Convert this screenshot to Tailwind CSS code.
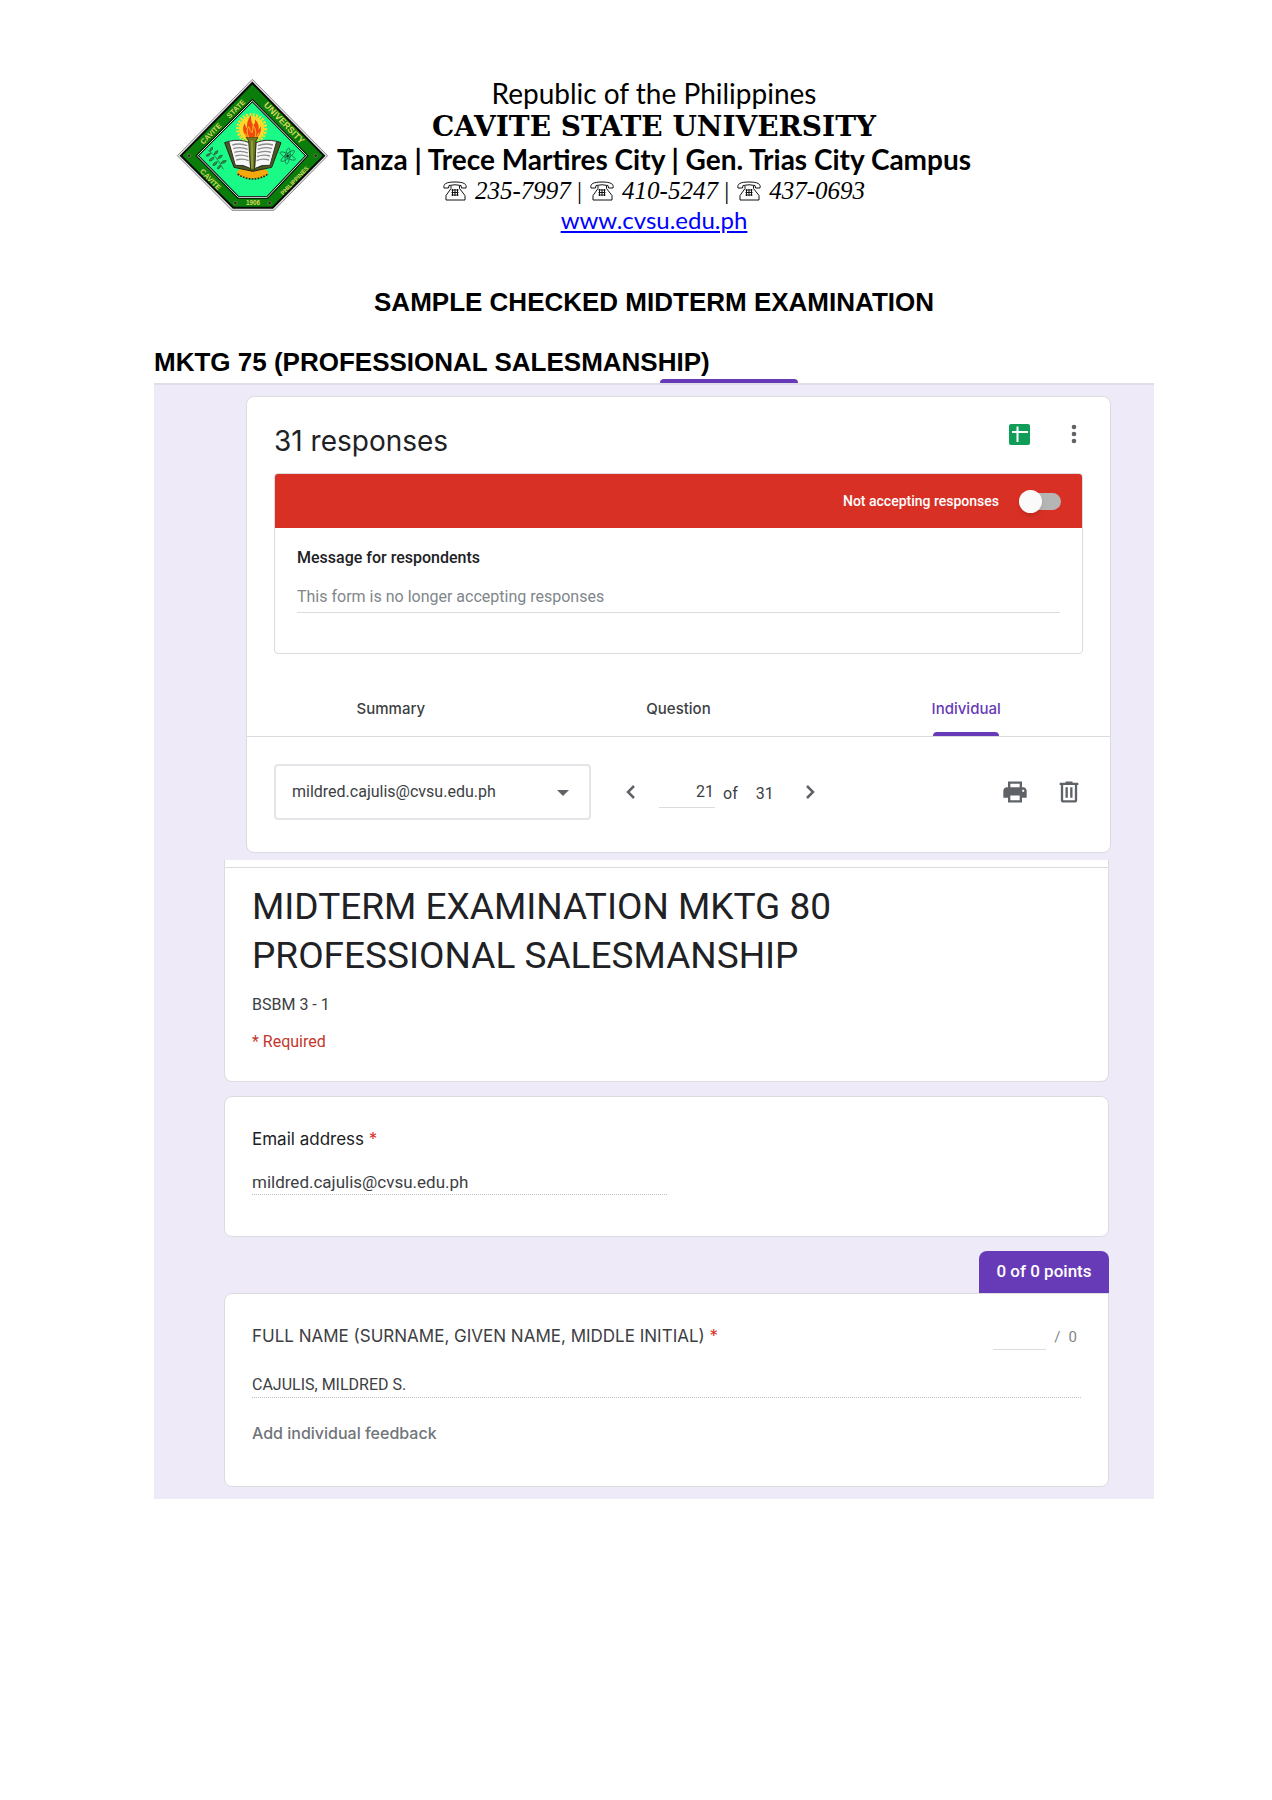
<!DOCTYPE html>
<html lang="en">
<head>
<meta charset="utf-8">
<meta name="viewport" content="width=device-width, initial-scale=1">
<title>Sample Checked Midterm Examination</title>
<script src="https://cdn.jsdelivr.net/npm/@tailwindcss/browser@4"></script>
</head>
<body class="min-h-screen bg-white pr-[118px] pb-12 pl-[154px] font-['Roboto',sans-serif] text-[16px] text-[#3c4043]">

<svg class="hidden" aria-hidden="true">
  <symbol id="phone" viewBox="0 0 24 20">
    <g fill="none" stroke="#111" stroke-width="1">
      <path d="M1 7 C0 3 3 1 12 1 S24 3 23 7 L18.500 7 L18 4.500 Q12 3 6 4.500 L5.500 7 Z"/>
      <path d="M8 5 V7.500 L3 14.500 V19 H22 V14.500 L16.500 7.500 V5"/>
      <path d="M8.500 9h7M8.500 11.500h7M8.500 14h7M9.500 8v7M12 8v7M14.500 8v7"/>
    </g>
  </symbol>
</svg>

<header class="grid grid-cols-[180px_1fr_180px] pt-[70px]">
  <svg class="ml-[6px] h-[150px] w-[174px]" viewBox="0 0 522 450" role="img" aria-label="Cavite State University seal">
    <path d="M277 28 L503 257 L342 421 H216 L52 257 Z" fill="#e4e4e4" stroke="#8a8a8a" stroke-width="3"/>
    <path d="M277 39 L492 257 L338 413 H220 L63 257 Z" fill="#0a7d0a" stroke="#0a0a0a" stroke-width="6"/>
    <path d="M277 92 L440 257 L322 382 H235 L112 257 Z" fill="#19fa86" stroke="#0a0a0a" stroke-width="8"/>
    <path d="M277 92 L440 257 L322 382 H235 L112 257 Z" fill="none" stroke="#d8e8d8" stroke-width="3"/>
    <g fill="#d8d860" font-family="Liberation Sans, sans-serif" font-weight="700" font-size="22" text-anchor="middle">
      <text transform="translate(158 196) rotate(-45)">CAVITE</text>
      <text transform="translate(233 122) rotate(-45)">STATE</text>
      <text transform="translate(366 165) rotate(46)" font-size="27">UNIVERSITY</text>
      <text transform="translate(146 334) rotate(46)" font-size="22">CAVITE</text>
      <text transform="translate(408 336) rotate(-46)" font-size="18">PHILIPPINES</text>
      <text x="279" y="406" font-size="19">1906</text>
    </g>
    <g fill="#222" stroke="#7a9a50" stroke-width="2"><circle cx="87" cy="257" r="5"/><circle cx="467" cy="257" r="5"/><circle cx="226" cy="399" r="5"/><circle cx="329" cy="399" r="5"/></g>
    <circle cx="275" cy="176" r="38" fill="#ffd928"/>
    <circle cx="275" cy="176" r="42" fill="none" stroke="#ffd928" stroke-width="9" stroke-dasharray="6 4"/>
    <ellipse cx="278" cy="308" rx="47" ry="18" fill="#f5a80c"/>
    <path d="M233 312 Q278 342 324 312" fill="none" stroke="#222" stroke-width="5" stroke-dasharray="5 4"/>
    <path d="M194 218 L222 292 L278 304 L335 292 L363 218 L350 214 L326 282 L278 296 L230 282 L207 214 Z" fill="#4c5a1c" stroke="#222" stroke-width="3"/>
    <path d="M206 214 Q240 206 268 218 L272 296 Q250 282 226 286 Z M350 214 Q318 206 288 218 L284 296 Q306 282 330 286 Z" fill="#f6f6f6" stroke="#333" stroke-width="3"/>
    <path d="M217 225 Q240 218 262 227 M220 236 Q242 229 263 238 M223 247 Q244 240 264 249 M226 258 Q246 252 265 260 M229 270 Q248 264 266 272 M339 225 Q316 218 294 227 M336 236 Q314 229 293 238 M333 247 Q312 240 292 249 M330 258 Q310 252 291 260 M327 270 Q308 264 290 272" fill="none" stroke="#8c8c8c" stroke-width="4"/>
    <path d="M258 201 H294 L288 212 L283 300 H272 L266 212 Z" fill="#6c7c22" stroke="#30380c" stroke-width="3"/>
    <path d="M276 212 V296" stroke="#b4b450" stroke-width="3"/>
    <path d="M259 202 Q242 180 254 160 Q257 172 262 176 Q258 154 273 136 Q272 156 281 166 Q287 158 285 148 Q300 164 295 180 Q300 176 302 168 Q306 188 292 202 Z" fill="#ee4a10"/>
    <path d="M266 201 Q256 184 266 170 Q270 184 276 188 Q280 176 279 166 Q292 184 285 201 M254 190 L262 201 M297 188 L290 201" fill="none" stroke="#ffbc20" stroke-width="3"/>
    <g fill="#27994c" stroke="#2c4a34" stroke-width="2">
      <path d="M143 240 Q170 258 190 298" fill="none"/>
      <path d="M150 244 q-2 -10 7 -13 q5 8 -7 13 M162 254 q2 -12 12 -12 q0 10 -12 12 M173 266 q4 -12 14 -10 q-2 10 -14 10 M182 280 q6 -12 17 -8 q-4 10 -17 8 M152 250 q-12 0 -14 8 q10 4 14 -8 M162 262 q-14 2 -14 11 q11 1 14 -11 M172 275 q-14 2 -13 12 q11 0 13 -12 M182 286 q-11 2 -9 11 q9 -1 9 -11"/>
    </g>
    <g fill="none" stroke="#1d5c3a" stroke-width="2">
      <ellipse cx="383" cy="258" rx="25" ry="7" transform="rotate(25 383 258)"/><ellipse cx="383" cy="258" rx="25" ry="7" transform="rotate(-38 383 258)"/><ellipse cx="383" cy="258" rx="24" ry="7" transform="rotate(98 383 258)"/>
      <circle cx="383" cy="258" r="4" fill="#222"/>
    </g>
  </svg>
  <div class="flex flex-col items-center whitespace-nowrap pt-[7px] text-black">
    <p class="font-['Lato',sans-serif] text-[28px] leading-[33px]">Republic of the Philippines</p>
    <h1 class="font-['DejaVu_Serif',serif] text-[28px] leading-[33px] font-bold">CAVITE STATE UNIVERSITY</h1>
    <p class="font-['Lato',sans-serif] text-[28px] leading-[33px] font-bold">Tanza | Trece Martires City | Gen. Trias City Campus</p>
    <p class="flex items-center gap-2 font-['Liberation_Serif',serif] text-[25px] leading-[29px] italic">
      <svg class="h-5 w-6"><use href="#phone"/></svg><span>235-7997 <span class="not-italic">|</span></span>
      <svg class="h-5 w-6"><use href="#phone"/></svg><span>410-5247 <span class="not-italic">|</span></span>
      <svg class="h-5 w-6"><use href="#phone"/></svg><span>437-0693</span>
    </p>
    <a href="#" class="font-['Lato',sans-serif] text-[24px] leading-[30px] text-[#0000ff] underline">www.cvsu.edu.ph</a>
  </div>
</header>

<main>
  <h2 class="mt-[37px] text-center font-['Liberation_Sans',sans-serif] text-[26px] leading-[60px] font-bold whitespace-nowrap text-black">SAMPLE CHECKED MIDTERM EXAMINATION</h2>
  <h2 class="font-['Liberation_Sans',sans-serif] text-[26px] leading-[60px] font-bold whitespace-nowrap text-black">MKTG 75 (PROFESSIONAL SALESMANSHIP)</h2>
  <div class="-mt-[13px] flex justify-center pl-[150px]"><div class="h-1 w-[138px] rounded-t bg-[#673ab7]"></div></div>

  <section class="border-t-2 border-[#dfdde6] bg-[#eeeaf8] pt-[11px] pr-[43px] pb-[7px] pl-[92px]">
    <div class="rounded-lg border border-[#dadce0] bg-white">
      <div class="flex items-center justify-between px-[27px] pt-3">
        <h3 class="font-['Inter',sans-serif] text-[28px] leading-[64px] text-[#202124]">31 responses</h3>
        <div class="-mt-[14px] flex items-center gap-[30px]">
          <button type="button" aria-label="View responses in Sheets"><svg class="size-[22px]" viewBox="0 0 22 22"><rect width="21" height="21" y="1" rx="2" fill="#0f9d58"/><path d="M3 9H19M8.500 3.500V19" stroke="#fff" stroke-width="2"/></svg></button>
          <button type="button" aria-label="More options"><svg class="size-[22px]" viewBox="0 0 22 22" fill="#5f6368"><circle cx="13" cy="4" r="2.300"/><circle cx="13" cy="11" r="2.300"/><circle cx="13" cy="18" r="2.300"/></svg></button>
        </div>
      </div>
      <div class="mx-[27px] overflow-hidden rounded border border-[#dadce0]">
        <label class="-mx-px -mt-px flex h-[55px] items-center justify-end gap-5 bg-[#d93025] pt-[2px] pr-[22px] text-[14px] font-medium text-white">Not accepting responses
          <input type="checkbox" role="switch" class="relative h-[17px] w-[42px] appearance-none rounded-full bg-[#b5b5b5] before:absolute before:-top-[3px] before:left-0 before:size-[23px] before:rounded-full before:bg-[#fafafa] before:shadow-md">
        </label>
        <div class="px-[22px] pt-[18px] pb-10">
          <label for="message" class="block text-[16px] leading-6 font-medium text-[#202124]">Message for respondents</label>
          <input id="message" type="text" placeholder="This form is no longer accepting responses" class="mt-[11px] block h-8 w-full border-b border-[#dadce0] text-[16px] placeholder:text-[#80868b]">
        </div>
      </div>
      <nav class="mt-[29px] grid h-[54px] grid-cols-3 border-b border-[#dadce0] font-['Inter',sans-serif] text-[15px] font-medium" role="tablist">
        <button type="button" role="tab">Summary</button>
        <button type="button" role="tab">Question</button>
        <button type="button" role="tab" aria-selected="true" class="relative text-[#673ab7]">Individual<span class="absolute bottom-0 left-1/2 h-1 w-[66px] -translate-x-1/2 rounded-t bg-[#673ab7]"></span></button>
      </nav>
      <div class="flex items-center px-[27px] pt-[27px] pb-8">
        <div class="relative w-[317px]">
          <select aria-label="Respondent" class="h-[56px] w-full appearance-none rounded border-2 border-[#e4e5e8] pl-4 text-[16px]"><option>mildred.cajulis@cvsu.edu.ph</option></select>
          <svg class="pointer-events-none absolute top-[26px] right-[22px] h-[6px] w-3" viewBox="0 0 12 6"><path d="M0 0H12L6 6Z" fill="#5f6368"/></svg>
        </div>
        <button type="button" aria-label="Previous response" class="ml-[34px]"><svg class="h-4 w-3" viewBox="0 0 12 16"><path d="M9 2L3 8L9 14" fill="none" stroke="#5f6368" stroke-width="2.500"/></svg></button>
        <input type="text" aria-label="Response number" value="21" class="ml-[22px] h-8 w-[56px] border-b border-[#dadce0] pr-px text-right text-[16px]">
        <span class="ml-2 pt-1">of</span><span class="ml-[18px] pt-1">31</span>
        <button type="button" aria-label="Next response" class="ml-[30px]"><svg class="h-4 w-3" viewBox="0 0 12 16"><path d="M3 2L9 8L3 14" fill="none" stroke="#5f6368" stroke-width="2.500"/></svg></button>
        <button type="button" aria-label="Print" class="ml-auto"><svg class="size-7" viewBox="0 0 24 24" fill="#5f6368"><path d="M19 8h-1V3H6v5H5c-1.660 0-3 1.340-3 3v6h4v4h12v-4h4v-6c0-1.660-1.340-3-3-3zM8 5h8v3H8V5zm8 14H8v-4h8v4zm3-7c-.55 0-1-.45-1-1s.45-1 1-1 1 .45 1 1-.45 1-1 1z"/></svg></button>
        <button type="button" aria-label="Delete response" class="ml-[26px]"><svg class="size-7" viewBox="0 0 24 24" fill="#5f6368"><path d="M15 4V3H9v1H4v2h1v13c0 1.100.9 2 2 2h10c1.100 0 2-.9 2-2V6h1V4h-5zm2 15H7V6h10v13zM9 8h2v9H9zm4 0h2v9h-2z"/></svg></button>
      </div>
    </div>
  </section>

  <section class="bg-[#eeeaf8] pr-[45px] pb-3 pl-[70px]">
    <div class="h-[7px] border-x border-[#dadce0] bg-white"></div>
    <div class="rounded-b-lg border border-[#dadce0] bg-white px-[27px] pt-[14px] pb-[21px]">
      <h3 class="text-[37px] leading-[49px] text-[#202124]">MIDTERM EXAMINATION MKTG 80<br>PROFESSIONAL SALESMANSHIP</h3>
      <p class="mt-[6px] leading-[37px]">BSBM 3 - 1</p>
      <p class="leading-[37px] text-[#c5362c]">* Required</p>
    </div>
    <div class="mt-[14px] rounded-lg border border-[#dadce0] bg-white px-[27px] pt-7 pb-[41px]">
      <label for="email" class="block font-['Inter',sans-serif] text-[17px] leading-7 text-[#202124]">Email address <span class="text-[#d93025]">*</span></label>
      <input id="email" type="text" readonly value="mildred.cajulis@cvsu.edu.ph" class="mt-4 block h-[26px] w-1/2 border-b border-dotted border-[#bdc1c6] text-[17px]">
    </div>
    <div class="mt-[14px] ml-auto flex h-[42px] w-[130px] items-center justify-center rounded-t-lg bg-[#673ab7] text-[17px] font-medium text-white">0 of 0 points</div>
    <div class="rounded-lg rounded-tr-none border border-[#dadce0] bg-white px-[27px] pt-7 pb-[37px]">
      <div class="flex justify-between">
        <label for="name" class="font-['Inter',sans-serif] text-[17px] leading-7">FULL NAME (SURNAME, GIVEN NAME, MIDDLE INITIAL) <span class="text-[#d93025]">*</span></label>
        <div class="flex gap-2 pr-1 text-[15px] leading-[30px] text-[#80868b]"><input type="text" aria-label="Points" class="h-7 w-[53px] border-b border-[#dadce0]"><span>/</span><span>0</span></div>
      </div>
      <input id="name" type="text" readonly value="CAJULIS, MILDRED S." class="mt-5 block h-[26px] w-full border-b border-dotted border-[#bdc1c6] text-[16px]">
      <button type="button" class="mt-[19px] block font-['Inter',sans-serif] text-[16px] leading-8 font-medium text-[#70757a]">Add individual feedback</button>
    </div>
  </section>
</main>
</body>
</html>
